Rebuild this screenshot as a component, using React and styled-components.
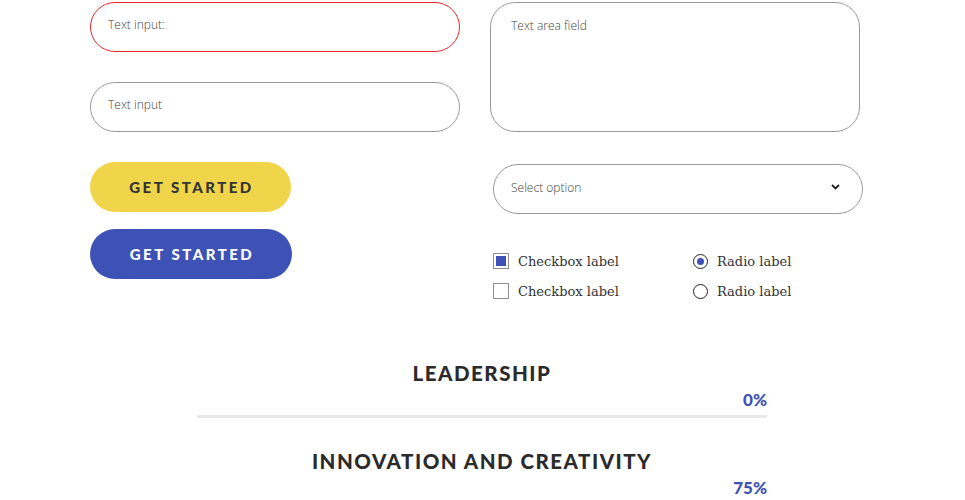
import React from "react";
import styled, { createGlobalStyle } from "styled-components";

const Global = createGlobalStyle`
  html, body { margin: 0; padding: 0; background: #fff; }
  body { font-family: "Open Sans", sans-serif; color: #333; }
`;

const Page = styled.div`
  width: 965px;
  height: 500px;
  overflow: hidden;
  padding-top: 2px;
  box-sizing: border-box;
`;

const FormGrid = styled.div`
  display: grid;
  grid-template-columns: 370px 370px;
  column-gap: 30px;
  margin-left: 90px;
`;

const Column = styled.div`
  display: flex;
  flex-direction: column;
  gap: ${(p) => p.$gap || 0}px;
  padding-top: ${(p) => p.$top || 0}px;
  padding-left: ${(p) => p.$left || 0}px;
`;

const Field = styled.div`
  height: 50px;
  box-sizing: border-box;
  border: 1px solid ${(p) => (p.$error ? "#e5262b" : "#9a9a9a")};
  border-radius: 25px;
  display: flex;
  align-items: center;
  padding: 0 17px 5px;
  font-family: "Open Sans", sans-serif;
  font-weight: 300;
  font-size: 12px;
  color: #444;
`;

const TextArea = styled.div`
  height: 130px;
  box-sizing: border-box;
  border: 1px solid #9a9a9a;
  border-radius: 25px;
  padding: 14px 20px;
  font-family: "Open Sans", sans-serif;
  font-weight: 300;
  font-size: 12px;
  color: #444;
`;

const Button = styled.button`
  width: ${(p) => p.$w}px;
  height: 50px;
  border: none;
  border-radius: 25px;
  background: ${(p) => (p.$variant === "blue" ? "#3e51b5" : "#f0d44a")};
  color: ${(p) => (p.$variant === "blue" ? "#fff" : "#333")};
  font-family: "Lato", sans-serif;
  font-weight: 900;
  font-size: 15px;
  letter-spacing: 2.5px;
  padding: 0 0 1px 2px;
  cursor: pointer;
`;

const Select = styled.div`
  width: 370px;
  height: 50px;
  box-sizing: border-box;
  border: 1px solid #9a9a9a;
  border-radius: 25px;
  display: flex;
  align-items: center;
  justify-content: space-between;
  padding: 0 22px 4px 17px;
  font-family: "Open Sans", sans-serif;
  font-weight: 300;
  font-size: 12px;
  color: #444;
`;

const Choices = styled.div`
  display: grid;
  grid-template-columns: 200px 170px;
  row-gap: 14px;
  margin-top: 39px;
`;

const Choice = styled.label`
  display: flex;
  align-items: center;
  gap: 9px;
  height: 16px;
  font-family: "DejaVu Serif", serif;
  font-size: 13px;
  color: #333;
`;

const Box = styled.span`
  width: 16px;
  height: 16px;
  box-sizing: border-box;
  border: 1px solid #8f8f8f;
  padding: 2px;
  display: flex;
  &::after {
    content: "";
    flex: 1;
    background: ${(p) => (p.$checked ? "#3e51b5" : "transparent")};
  }
`;

const Radio = styled.span`
  width: 15px;
  height: 15px;
  box-sizing: border-box;
  border: 1px solid #222;
  border-radius: 50%;
  display: flex;
  align-items: center;
  justify-content: center;
  &::after {
    content: "";
    width: 7px;
    height: 7px;
    border-radius: 50%;
    background: ${(p) => (p.$checked ? "#3e51b5" : "transparent")};
  }
`;

const Skills = styled.div`
  width: 570px;
  margin: 61px 0 0 197px;
  display: flex;
  flex-direction: column;
`;

const Skill = styled.div`
  display: flex;
  flex-direction: column;
  margin-bottom: 30px;
`;

const SkillTitle = styled.h3`
  margin: 0;
  text-align: center;
  font-family: "Lato", sans-serif;
  font-weight: 900;
  font-size: 20.5px;
  letter-spacing: 1.5px;
  color: #2b2b2b;
  line-height: 26px;
`;

const Percent = styled.div`
  text-align: right;
  font-family: "Lato", sans-serif;
  font-weight: 900;
  font-size: 17px;
  color: #3e51b5;
  line-height: 20px;
  margin-top: 4px;
`;

const Track = styled.div`
  height: 3px;
  background: #e8e8e8;
  margin-top: 5px;
`;

const Fill = styled.div`
  height: 100%;
  background: #3e51b5;
`;

const Chevron = () => (
  <svg width="9" height="6" viewBox="0 0 9 6">
    <path d="M1 1l3.5 3.5L8 1" fill="none" stroke="#222" strokeWidth="1.8" />
  </svg>
);

const skills = [
  { name: "LEADERSHIP", value: 0 },
  { name: "INNOVATION AND CREATIVITY", value: 75 },
];

export default function App() {
  return (
    <Page>
      <Global />
      <FormGrid>
        <Column $gap={30}>
          <Field $error>Text input:</Field>
          <Field>Text input</Field>
        </Column>
        <TextArea>Text area field</TextArea>
        <Column $gap={17} $top={30}>
          <Button $w={201}>GET STARTED</Button>
          <Button $w={202} $variant="blue">GET STARTED</Button>
        </Column>
        <Column $top={32} $left={3}>
          <Select>
            <span>Select option</span>
            <Chevron />
          </Select>
          <Choices>
            <Choice><Box $checked />Checkbox label</Choice>
            <Choice><Radio $checked />Radio label</Choice>
            <Choice><Box />Checkbox label</Choice>
            <Choice><Radio />Radio label</Choice>
          </Choices>
        </Column>
      </FormGrid>
      <Skills>
        {skills.map((s) => (
          <Skill key={s.name}>
            <SkillTitle>{s.name}</SkillTitle>
            <Percent>{s.value}%</Percent>
            <Track>
              <Fill style={{ width: `${s.value}%` }} />
            </Track>
          </Skill>
        ))}
      </Skills>
    </Page>
  );
}
